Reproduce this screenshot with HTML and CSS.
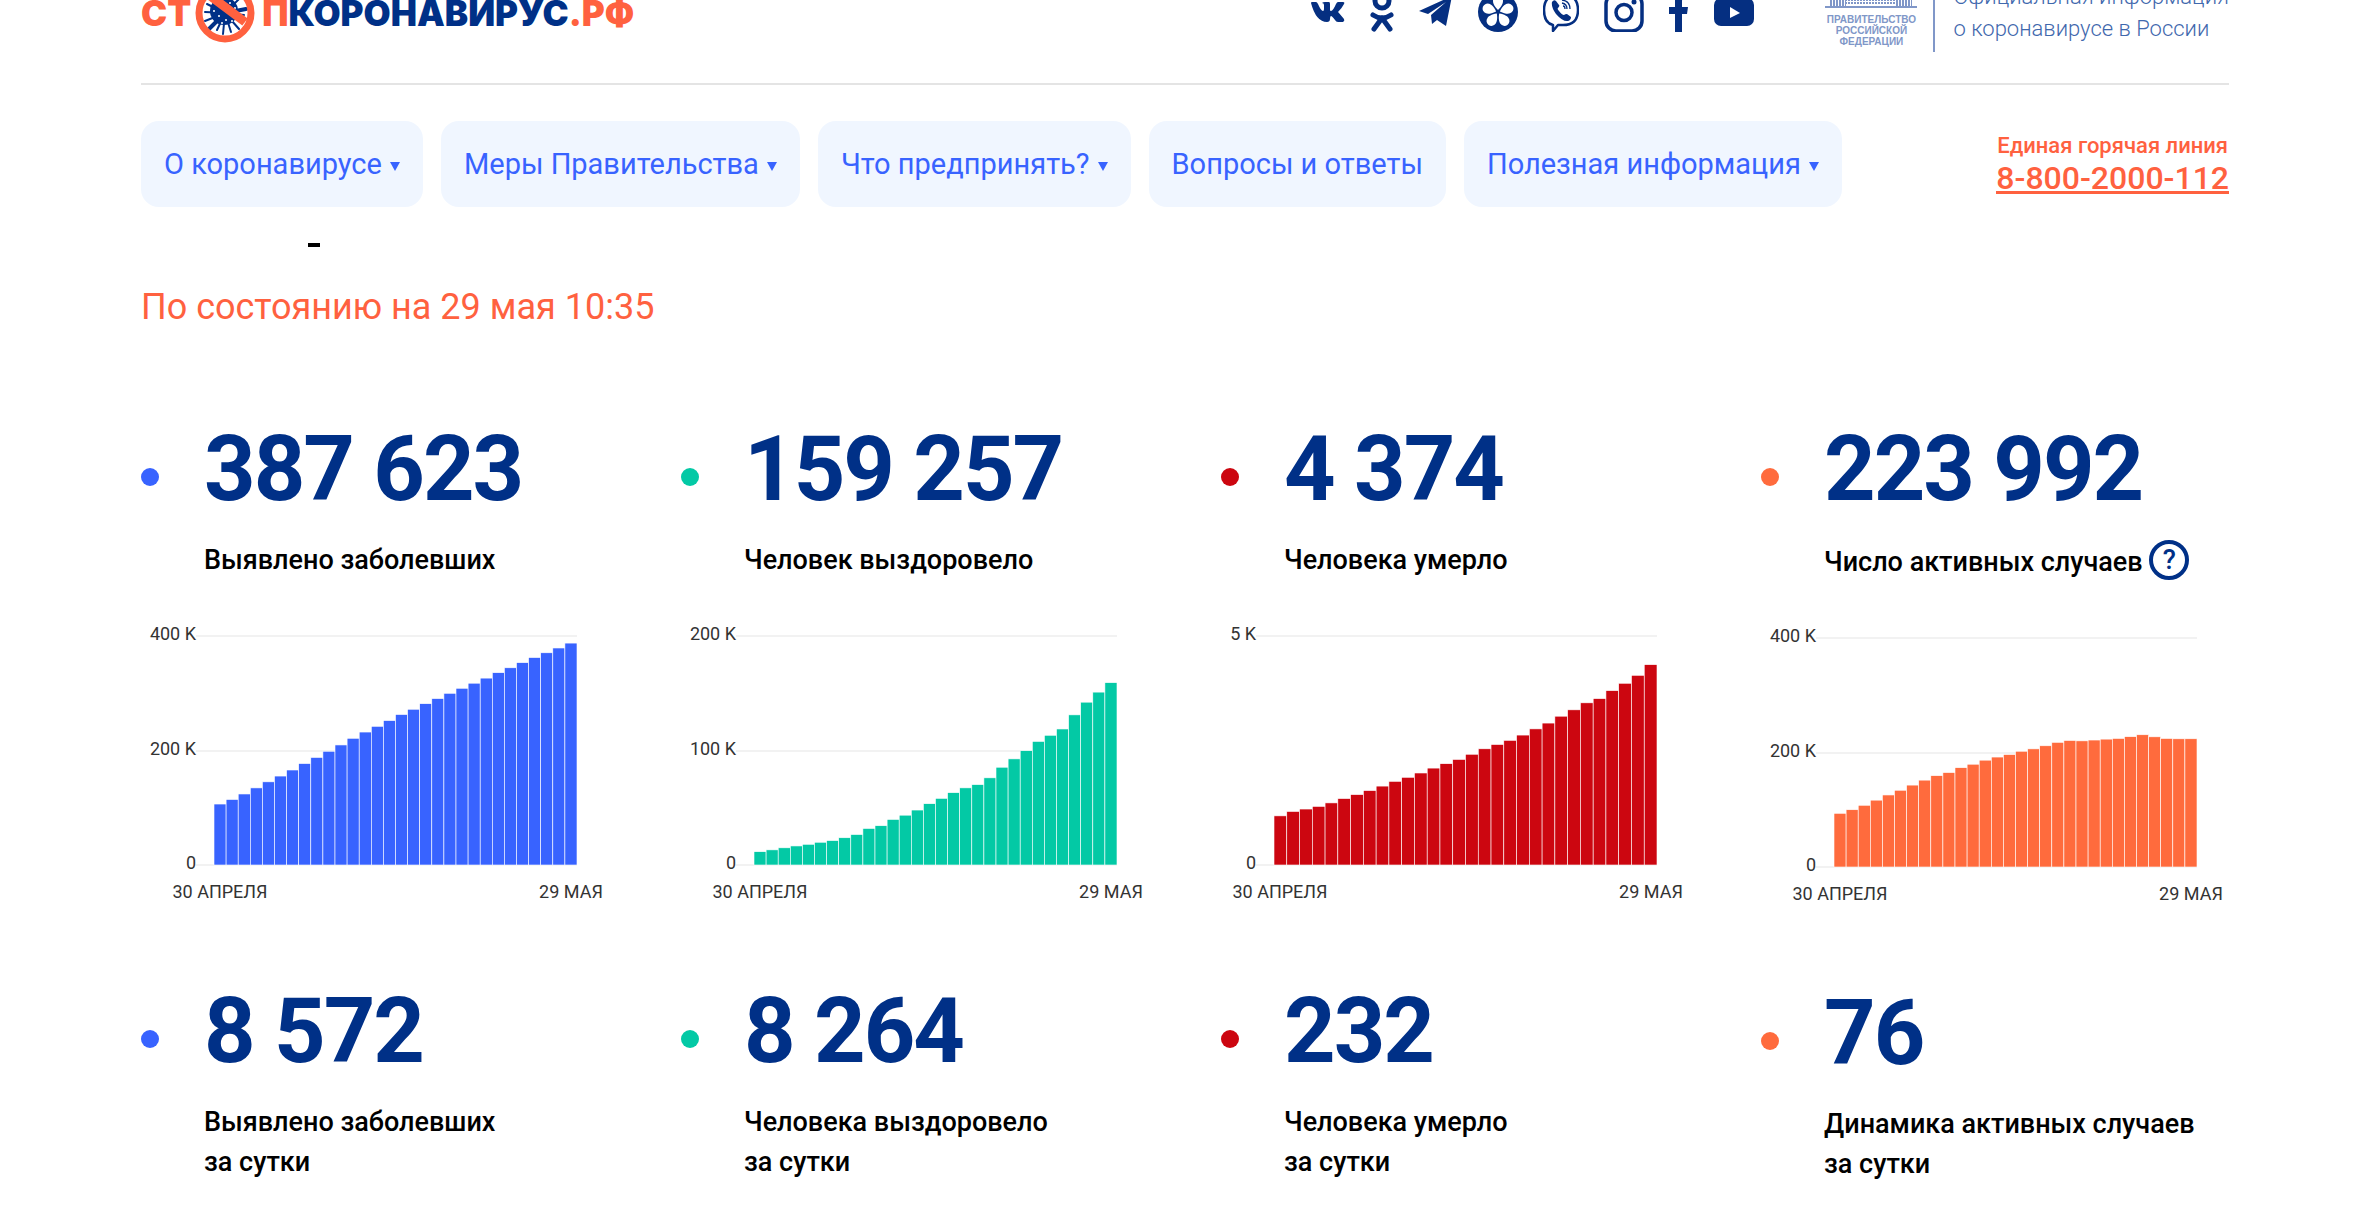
FILE: index.html
```html
<!DOCTYPE html>
<html lang="ru">
<head>
<meta charset="utf-8">
<title>СТОПКОРОНАВИРУС.РФ</title>
<meta name="viewport" content="width=device-width, initial-scale=1">
<link rel="stylesheet" href="styles.css">
</head>
<body>
<div class="page">
  <header class="header">
    <a class="logo" href="#" aria-label="Стопкоронавирус.рф">
      <span class="logo-accent">СТ</span>
      <svg class="logo-sign" viewBox="0 0 60 60" aria-hidden="true">
        <g stroke="#003087" stroke-width="2" stroke-linecap="round">
          <path d="M30 30L28 51M30 30L36 49M30 30L22 47M30 30L44 46M30 30L10 38M30 30L49 32M30 30L10 29M30 30L47 38M30 30L12 21M30 30L46 14M30 30L30 10M30 30L18 13"/>
          <path d="M30 30L14 46M30 30L51 26" stroke-width="4"/>
        </g>
        <circle cx="29" cy="28" r="14" fill="#003087"/>
        <g fill="#fff"><circle cx="24" cy="33" r="1"/><circle cx="31" cy="37" r="1"/><circle cx="35" cy="20" r="1"/><circle cx="19" cy="28" r="1"/><circle cx="37" cy="38" r="1"/><circle cx="27" cy="40" r="1"/><circle cx="40" cy="25" r="1"/></g>
        <path d="M10 9L50 39" stroke="#ff613f" stroke-width="9"/>
        <circle cx="30" cy="30" r="26" fill="none" stroke="#ff613f" stroke-width="7"/>
      </svg>
      <span class="logo-accent">П</span><span class="logo-main">КОРОНАВИРУС</span><span class="logo-accent">.РФ</span>
    </a>
    <nav class="social" aria-label="Социальные сети">
      <a href="#" aria-label="ВКонтакте"><svg width="34" height="40" viewBox="0 0 34 40"><path d="M0 11q0-1 1-1h4q1 0 2 2 3 7 5 7 1 0 1-2v-4q0-2-2-2 1-1 3-1h4q1 0 1 2v6q0 1 1 1 2 0 5-7 1-2 2-2h5q2 0 1 2-2 4-6 8 1 1 6 7 1 2-1 3h-5q-2 0-3-2-3-4-4-4-1 0-1 3 0 3-3 3Q5 30 0 11z"/></svg></a>
      <a href="#" aria-label="Одноклассники"><svg width="24" height="40" viewBox="0 0 24 40"><g fill="none" stroke="#052f81" stroke-width="5" stroke-linecap="round"><circle cx="12" cy="9" r="7"/><path d="M3 23q9 6 18 0M12 26L4 37M12 26l8 11"/></g></svg></a>
      <a href="#" aria-label="Telegram"><svg width="34" height="40" viewBox="0 0 34 40"><path d="M0 19L33 4 27 34 18 28 13 32 12 23 27 10 9 22z"/></svg></a>
      <a href="#" aria-label="Кинопоиск"><svg width="40" height="40" viewBox="0 0 40 40"><circle cx="20" cy="20" r="20"/>
        <g fill="#fff"><path id="petal" d="M20 18C16 14 15 11 15 9a5 5 0 0 1 10 0C25 11 24 14 20 18z"/><use href="#petal" transform="rotate(72 20 20)"/><use href="#petal" transform="rotate(144 20 20)"/><use href="#petal" transform="rotate(216 20 20)"/><use href="#petal" transform="rotate(288 20 20)"/></g></svg></a>
      <a href="#" aria-label="Viber"><svg width="36" height="40" viewBox="0 0 36 40"><g fill="none" stroke="#052f81"><path d="M10 39V33Q1 31 1 18 1 2 18 2T35 18 18 33h-3z" stroke-width="2.5" stroke-linejoin="round"/><path d="M19 8q8 1 8 9M19 11q5 1 5 6M20 14q2 0 2 3" stroke-width="1.3"/></g><path d="M9 10q2-3 4-1l3 4q1 1-1 3-1 1 1 3 3 4 5 4 1-1 3-1l4 3q0 3-3 4-5 1-12-7-5-7-4-12z"/></svg></a>
      <a href="#" aria-label="Instagram"><svg width="40" height="40" viewBox="0 0 40 40"><g fill="none" stroke="#052f81"><rect x="2" y="2" width="36" height="37" rx="10" stroke-width="3.5"/><circle cx="20" cy="20.5" r="8" stroke-width="3.5"/></g><circle cx="30" cy="10" r="2.5"/></svg></a>
      <a href="#" aria-label="Facebook"><svg width="20" height="40" viewBox="0 0 20 40"><path d="M6 40V22H0v-7h6V8q0-8 8-8h5v7h-4q-2 0-2 2v6h6l-1 7h-5v18z"/></svg></a>
      <a href="#" aria-label="YouTube"><svg width="40" height="40" viewBox="0 0 40 40"><rect y="6" width="40" height="28" rx="7"/><path d="M16 15v11l10-5z" fill="#fff"/></svg></a>
    </nav>
    <div class="official">
      <div class="government">
        <svg width="92" height="24" viewBox="0 0 92 24" aria-hidden="true"><g stroke="#8097c8" fill="none"><path d="M0 23h92" stroke-width="2"/><path d="M5 19h16M71 19h16" stroke-width="6" stroke-dasharray="2 1"/><path d="M20 16h54M20 19h54" stroke-width="2" stroke-dasharray="2 1"/></g></svg>
        <span>ПРАВИТЕЛЬСТВО<br>РОССИЙСКОЙ<br>ФЕДЕРАЦИИ</span>
      </div>
      <p class="official-text">Официальная информация<br>о коронавирусе в России</p>
    </div>
  </header>

  <div class="menu">
    <nav class="menu-list" aria-label="Разделы">
      <button type="button" class="menu-item">О коронавирусе<span class="caret"></span></button>
      <button type="button" class="menu-item">Меры Правительства<span class="caret"></span></button>
      <button type="button" class="menu-item">Что предпринять?<span class="caret"></span></button>
      <a href="#" class="menu-item">Вопросы и ответы</a>
      <button type="button" class="menu-item">Полезная информация<span class="caret"></span></button>
    </nav>
    <div class="hotline">
      <span class="hotline-title">Единая горячая линия</span>
      <a class="hotline-phone" href="tel:88002000112">8-800-2000-112</a>
    </div>
  </div>

  <main>
    <div class="dash"></div>
    <p class="updated">По состоянию на 29 мая 10:35</p>
    <div class="stats">
      <section class="column blue">
        <div class="stat"><span class="dot"></span><div><div class="value">387 623</div><div class="label">Выявлено заболевших</div></div></div>
        <svg class="chart" viewBox="0 0 468 320" data-series="cases"></svg>
        <div class="stat"><span class="dot"></span><div><div class="value">8 572</div><div class="label">Выявлено заболевших<br>за сутки</div></div></div>
      </section>
      <section class="column green">
        <div class="stat"><span class="dot"></span><div><div class="value">159 257</div><div class="label">Человек выздоровело</div></div></div>
        <svg class="chart" viewBox="0 0 468 320" data-series="recovered"></svg>
        <div class="stat"><span class="dot"></span><div><div class="value">8 264</div><div class="label">Человека выздоровело<br>за сутки</div></div></div>
      </section>
      <section class="column red">
        <div class="stat"><span class="dot"></span><div><div class="value">4 374</div><div class="label">Человека умерло</div></div></div>
        <svg class="chart" viewBox="0 0 468 320" data-series="deaths"></svg>
        <div class="stat"><span class="dot"></span><div><div class="value">232</div><div class="label">Человека умерло<br>за сутки</div></div></div>
      </section>
      <section class="column orange">
        <div class="stat"><span class="dot"></span><div><div class="value">223 992</div><div class="label">Число активных случаев <button type="button" class="help">?</button></div></div></div>
        <svg class="chart" viewBox="0 0 468 320" data-series="active"></svg>
        <div class="stat"><span class="dot"></span><div><div class="value">76</div><div class="label">Динамика активных случаев<br>за сутки</div></div></div>
      </section>
    </div>
  </main>
</div>
<script src="charts.js"></script>
</body>
</html>
```
FILE: styles.css
```css
* { box-sizing: border-box; }
body { margin: 0; background: #fff; color: #000; font-family: Roboto, "Liberation Sans", sans-serif; }
a { color: inherit; text-decoration: none; }
button { font: inherit; border: 0; cursor: pointer; }
p { margin: 0; }
.page { padding: 0 137px 0 141px; }

/* Header */
.header { display: flex; align-items: flex-end; height: 85px; overflow: hidden; border-bottom: 2px solid #e4e4e4; }
.logo { display: flex; align-items: center; height: 60px; margin-bottom: 40px; font: 900 35px/60px Inter, sans-serif; color: #003087; }
.logo-sign { width: 60px; height: 60px; margin: 0 7px 0 4px; }
.logo-accent { color: #ff613f; }
.social { display: flex; gap: 25px; margin: 0 71px 51px auto; }
.social a { display: block; height: 40px; }
.social svg { display: block; fill: #052f81; }
.official { display: flex; align-items: flex-end; margin-bottom: 31px; }
.government { width: 108px; padding-right: 16px; margin-bottom: 5px; text-align: center; font: 700 10px/11px "Liberation Sans", sans-serif; color: #8097c8; }
.government svg { display: block; margin-bottom: 6px; }
.official-text { padding: 0 0 7px 18px; border-left: 2px solid #8097c8; font-size: 22px; font-weight: 300; line-height: 32px; color: #3f68ad; }

/* Menu */
.menu { display: flex; align-items: center; justify-content: space-between; padding-top: 36px; }
.menu-list { display: flex; gap: 18px; }
.menu-item { display: flex; align-items: center; height: 86px; padding: 0 23px; border-radius: 18px; background: #f0f6ff; color: #3863ff; font-size: 29px; white-space: nowrap; }
.caret { margin: 5px 0 0 8px; border: 5px solid transparent; border-top: 9px solid #3863ff; border-bottom: 0; }
.hotline { display: flex; flex-direction: column; align-items: center; gap: 4px; margin-bottom: 4px; color: #ff613f; font-weight: 500; white-space: nowrap; }
.hotline-title { font-size: 22px; line-height: 30px; }
.hotline-phone { font-size: 32px; line-height: 26px; border-bottom: 3px solid; }

/* Figures */
.dash { width: 12px; height: 4px; margin: 36px 0 38px 167px; background: #000; }
.updated { font-size: 36px; line-height: 44px; color: #ff613f; }
.stats { display: grid; grid-template-columns: repeat(4, 1fr); gap: 72px; padding-top: 94px; }
.stat { display: grid; grid-template-columns: 63px 1fr; }
.dot { width: 18px; height: 18px; margin-top: 45px; border-radius: 50%; background: currentColor; }
.value { font-size: 90px; font-weight: 700; line-height: 94px; letter-spacing: -2px; color: #003087; white-space: nowrap; }
.label { margin-top: 23px; font-size: 27px; font-weight: 500; line-height: 40px; color: #000; white-space: nowrap; }
.help { width: 40px; height: 40px; padding: 0; border: 4px solid #003087; border-radius: 50%; background: none; color: #003087; font-size: 27px; line-height: 32px; vertical-align: 2px; }
.chart { display: block; width: 100%; margin: 20px 0 65px; overflow: visible; }
.chart rect { fill: currentColor; stroke: #fff; stroke-width: .6px; }
.chart text { font-size: 18px; fill: #333; }
.chart line { stroke: #f2f2f2; stroke-width: 2px; }
.blue { color: #3863ff; }
.green { color: #03c9a5; }
.red { color: #cc0610; }
.orange { color: #ff6b3d; }
```
FILE: charts.js
```js
const cases = [106498,114431,124054,134687,145268,155370,165929,177160,187859,198676,209688,221344,232243,242271,252245,262843,272043,281752,290678,299941,308705,317554,326448,335882,344481,353427,362342,370680,379051,387623];
const recovered = [11619,13220,15013,16639,18095,19865,21327,23803,26608,31916,34306,39801,43512,48003,53530,58226,63166,67373,70209,76130,85392,92681,99825,107936,113299,118798,131129,142208,150993,159257];
const deaths = [1073,1169,1222,1280,1356,1451,1537,1625,1723,1827,1915,2009,2116,2212,2305,2418,2537,2631,2722,2837,2972,3099,3249,3388,3541,3633,3807,3968,4142,4374];
const active = cases.map((n, i) => n - recovered[i] - deaths[i]);

const charts = {
  cases: { data: cases, max: 400000, ticks: ['0', '200 K', '400 K'], left: 73 },
  recovered: { data: recovered, max: 200000, ticks: ['0', '100 K', '200 K'], left: 73 },
  deaths: { data: deaths, max: 5000, ticks: ['0', '5 K'], left: 53 },
  active: { data: active, max: 400000, ticks: ['0', '200 K', '400 K'], left: 73 }
};
const right = 436, bottom = 265, height = 229;

document.querySelectorAll('.chart').forEach(svg => {
  const c = charts[svg.dataset.series];
  const axis = c.left - 18;
  const step = (right - c.left) / c.data.length;
  let out = '';
  c.ticks.forEach((t, i) => {
    const y = Math.round(bottom - height * i / (c.ticks.length - 1));
    out += `<line x1="${axis}" y1="${y}" x2="${right}" y2="${y}"/><text x="${axis}" y="${y + 4}" text-anchor="end">${t}</text>`;
  });
  c.data.forEach((v, i) => {
    const h = v / c.max * height;
    out += `<rect x="${c.left + i * step}" y="${bottom - h}" width="${step}" height="${h}"/>`;
  });
  out += `<text x="${c.left + 6}" y="298" text-anchor="middle">30 АПРЕЛЯ</text><text x="${right - 6}" y="298" text-anchor="middle">29 МАЯ</text>`;
  svg.innerHTML = out;
});
```
